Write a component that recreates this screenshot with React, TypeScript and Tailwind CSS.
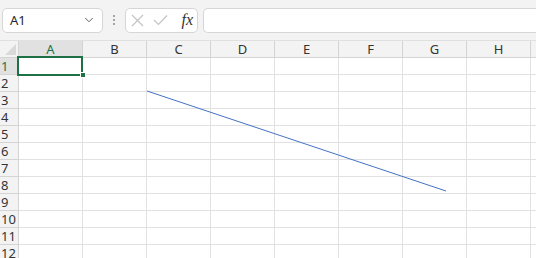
import { ChevronDown } from "lucide-react";

const cols = ["A", "B", "C", "D", "E", "F", "G", "H", ""];
const rows = [1, 2, 3, 4, 5, 6, 7, 8, 9, 10, 11, 12];

export default function App() {
  return (
    <div
      className="w-[536px] h-[258px] overflow-hidden bg-white text-[#262626]"
      style={{ fontFamily: '"Noto Sans", "Liberation Sans", sans-serif' }}
    >
      {/* formula bar */}
      <div className="h-[41px] bg-[#f3f3f3] flex items-center pl-[2px] border-b border-[#e0e0e0]">
        <div className="w-[101px] h-[25px] bg-white border border-[#d6d6d6] rounded-[5px] flex items-center justify-between pl-[7px] pr-[6px]">
          <span className="text-[13px] leading-none">A1</span>
          <ChevronDown className="w-[14px] h-[14px] text-[#555]" strokeWidth={1.6} />
        </div>
        <div className="w-[22px] flex flex-col items-center gap-[2px]">
          <span className="w-[2px] h-[2px] bg-[#8a8a8a] rounded-full" />
          <span className="w-[2px] h-[2px] bg-[#8a8a8a] rounded-full" />
          <span className="w-[2px] h-[2px] bg-[#8a8a8a] rounded-full" />
        </div>
        <div className="w-[73px] h-[25px] bg-white border border-[#d6d6d6] rounded-[5px] flex items-center pl-[5px] pr-[4px] gap-[9px]">
          <svg width="13" height="13" viewBox="0 0 13 13" className="shrink-0">
            <path d="M1 1 L12 12 M12 1 L1 12" stroke="#c4c4c4" strokeWidth="1.2" fill="none" />
          </svg>
          <svg width="15" height="12" viewBox="0 0 15 12" className="shrink-0">
            <path d="M1 6 L5.5 10.5 L14 1.5" stroke="#c4c4c4" strokeWidth="1.2" fill="none" />
          </svg>
          <span
            className="ml-auto text-[16px] italic leading-none text-[#333]"
            style={{ fontFamily: '"Liberation Serif", "DejaVu Serif", serif' }}
          >
            fx
          </span>
        </div>
        <div className="ml-[5px] flex-1 h-[25px] bg-white border border-[#d6d6d6] rounded-l-[5px] border-r-0" />
      </div>

      {/* sheet */}
      <div className="relative">
        <div className="grid grid-cols-[19px_repeat(9,64px)] grid-rows-[17px] auto-rows-[17px]">
          <div className="bg-[#f3f3f3] border-r border-b border-[#d4d4d4] relative">
            <svg width="11" height="11" viewBox="0 0 11 11" className="absolute right-[2px] bottom-[2px]">
              <path d="M11 0 L11 11 L0 11 Z" fill="#d9d9d9" />
            </svg>
          </div>
          {cols.map((c, i) => (
            <div
              key={i}
              className={
                c === "A"
                  ? "bg-[#e1e1e1] border-r border-b border-[#d4d4d4] flex items-center justify-center text-[13px] text-[#1e7145] leading-none"
                  : "bg-[#f3f3f3] border-r border-b border-[#d4d4d4] flex items-center justify-center text-[13px] text-[#333] leading-none"
              }
            >
              {c}
            </div>
          ))}
          {rows.map((r) => (
            <Row key={r} r={r} />
          ))}
        </div>

        {/* selection A1 */}
        <div className="absolute left-[17px] top-[15px] w-[66px] h-[20px] border-2 border-[#1e7145]" />
        <div className="absolute left-[80px] top-[31px] w-[6px] h-[6px] bg-[#1e7145] border border-white" />

        {/* line shape */}
        <svg width="536" height="217" className="absolute left-0 top-0 pointer-events-none">
          <line x1="147" y1="50" x2="446" y2="150" stroke="#4472c4" strokeWidth="1" />
        </svg>
      </div>
    </div>
  );
}

function Row({ r }: { r: number }) {
  return (
    <>
      <div
        className={
          r === 1
            ? "bg-[#e1e1e1] border-r border-b border-[#d4d4d4] flex items-center pl-[1px] text-[13px] text-[#1e7145] leading-none"
            : "bg-[#f3f3f3] border-r border-b border-[#d4d4d4] flex items-center pl-[1px] text-[13px] text-[#333] leading-none"
        }
      >
        {r}
      </div>
      {cols.map((c, i) => (
        <div key={i} className="border-r border-b border-[#e1e1e1]" />
      ))}
    </>
  );
}
